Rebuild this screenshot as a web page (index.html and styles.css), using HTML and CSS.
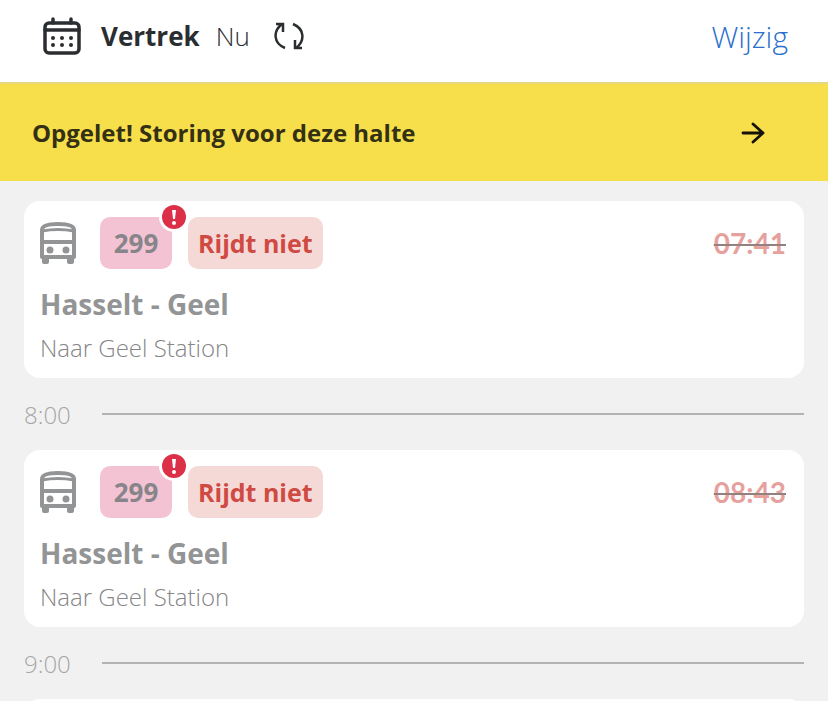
FILE: index.html
```html
<!DOCTYPE html>
<html lang="nl">
<head>
<meta charset="UTF-8">
<meta name="viewport" content="width=device-width, initial-scale=1.0">
<title>Vertrektijden</title>
<link rel="stylesheet" href="styles.css">
</head>
<body>
<svg class="sprite" aria-hidden="true">
  <symbol id="bus" viewBox="0 0 36 42">
    <g fill="none" stroke="currentColor" stroke-width="4" stroke-linejoin="round">
      <path d="M2 35V8Q2 2 18 2Q34 2 34 8V35Z"></path>
      <path d="M2 9Q18 6 34 9" stroke-width="3"></path>
      <path d="M2 20H34"></path>
    </g>
    <g fill="currentColor">
      <circle cx="10" cy="28" r="3.5"></circle>
      <circle cx="26" cy="28" r="3.5"></circle>
      <rect x="2" y="34" width="7" height="8" rx="2"></rect>
      <rect x="27" y="34" width="7" height="8" rx="2"></rect>
    </g>
  </symbol>
</svg>

<header class="topbar">
  <svg class="icon-calendar" viewBox="0 0 38 38" aria-hidden="true">
    <g fill="none" stroke="currentColor" stroke-width="3.5" stroke-linecap="round">
      <rect x="2" y="6" width="34" height="30" rx="4"></rect>
      <path d="M2 13H36M10 2V6M28 2V6"></path>
    </g>
    <g fill="currentColor">
      <circle cx="10" cy="21" r="2"></circle>
      <circle cx="19" cy="21" r="2"></circle>
      <circle cx="28" cy="21" r="2"></circle>
      <circle cx="10" cy="28" r="2"></circle>
      <circle cx="19" cy="28" r="2"></circle>
      <circle cx="28" cy="28" r="2"></circle>
    </g>
  </svg>
  <h1 class="topbar-title">Vertrek</h1>
  <span class="topbar-when">Nu</span>
  <button class="refresh" type="button" aria-label="Vernieuwen">
    <svg viewBox="0 0 30 28" aria-hidden="true">
      <path d="M11 26C-1 21 -1 9 8 2M2 2H9V10M19 2C31 7 31 19 22 26M28 26H21V18" fill="none" stroke="currentColor" stroke-width="2.5"></path>
    </svg>
  </button>
  <a class="edit" href="#">Wijzig</a>
</header>

<a class="alert" href="#">
  <span>Opgelet! Storing voor deze halte</span>
  <svg class="icon-arrow" viewBox="0 0 24 24" aria-hidden="true">
    <path d="M2 12H22M12 3L22 12L12 21" fill="none" stroke="currentColor" stroke-width="2.8" stroke-linecap="round" stroke-linejoin="round"></path>
  </svg>
</a>

<main class="departures">
  <article class="card">
    <div class="card-head">
      <svg class="icon-bus" aria-hidden="true"><use href="#bus"></use></svg>
      <span class="line">299
        <svg class="badge" viewBox="0 0 30 30" aria-hidden="true">
          <circle cx="15" cy="15" r="15" fill="#fff"></circle>
          <circle cx="15" cy="15" r="12" fill="#dc3049"></circle>
          <path d="M13 8H17L16 17H14Z" fill="#fff"></path>
          <circle cx="15" cy="21" r="2" fill="#fff"></circle>
        </svg>
      </span>
      <span class="status">Rijdt niet</span>
      <del class="time">07:41</del>
    </div>
    <h2 class="route">Hasselt - Geel</h2>
    <p class="direction">Naar Geel Station</p>
  </article>

  <div class="hour"><span>8:00</span></div>

  <article class="card">
    <div class="card-head">
      <svg class="icon-bus" aria-hidden="true"><use href="#bus"></use></svg>
      <span class="line">299
        <svg class="badge" viewBox="0 0 30 30" aria-hidden="true">
          <circle cx="15" cy="15" r="15" fill="#fff"></circle>
          <circle cx="15" cy="15" r="12" fill="#dc3049"></circle>
          <path d="M13 8H17L16 17H14Z" fill="#fff"></path>
          <circle cx="15" cy="21" r="2" fill="#fff"></circle>
        </svg>
      </span>
      <span class="status">Rijdt niet</span>
      <del class="time">08:43</del>
    </div>
    <h2 class="route">Hasselt - Geel</h2>
    <p class="direction">Naar Geel Station</p>
  </article>

  <div class="hour"><span>9:00</span></div>

  <article class="card"></article>
</main>
</body>
</html>
```

FILE: styles.css
```css
:root {
  --ink: #2b2e30;
  --grey: #939495;
  --grey-dark: #858687;
  --grey-light: #b3b3b3;
  --blue: #2a6fcb;
  --yellow: #f7de4b;
  --page: #f1f1f1;
}
* { box-sizing: border-box; }
body {
  margin: 0;
  height: 100vh;
  overflow: hidden;
  background: var(--page);
  color: var(--ink);
  font-family: "Open Sans", "Noto Sans", sans-serif;
}
h1, h2, p { margin: 0; }
a { text-decoration: none; }
.sprite {
  display: none;
}
.topbar {
  display: flex;
  align-items: center;
  height: 82px;
  padding: 0 40px 10px 43px;
  background: #fff;
}
.icon-calendar {
  width: 38px;
  height: 38px;
}
.topbar-title {
  margin-left: 20px;
  font-size: 26px;
  font-weight: 700;
}
.topbar-when {
  margin-left: 16px;
  font-size: 26px;
  font-weight: 300;
}
.refresh {
  display: flex;
  margin-left: 24px;
  padding: 0;
  border: none;
  background: none;
  color: var(--ink);
  cursor: pointer;
}
.refresh svg {
  width: 30px;
  height: 28px;
}
.edit {
  margin-left: auto;
  color: var(--blue);
  font-size: 30px;
  font-weight: 300;
}
.alert {
  display: flex;
  align-items: center;
  justify-content: space-between;
  height: 99px;
  padding: 0 63px 0 32px;
  border-top: 2px solid #e6d880;
  background: var(--yellow);
  color: #343014;
  font-size: 24px;
  font-weight: 700;
}
.icon-arrow {
  width: 24px;
  height: 24px;
  color: #15120a;
}
.departures {
  padding: 20px 24px;
}
.card {
  min-height: 177px;
  padding: 16px;
  border-radius: 16px;
  background: #fff;
  color: var(--grey);
}
.card-head {
  display: flex;
  align-items: center;
  height: 52px;
}
.icon-bus {
  width: 36px;
  height: 42px;
}
.line {
  position: relative;
  margin-left: 24px;
  width: 72px;
  border-radius: 10px;
  background: #f4c3d3;
  color: #87858a;
  font-size: 26px;
  font-weight: 700;
  line-height: 52px;
  text-align: center;
}
.badge {
  position: absolute;
  top: -15px;
  right: -17px;
  width: 30px;
  height: 30px;
}
.status {
  margin-left: 16px;
  padding: 0 10px;
  border-radius: 10px;
  background: #f5d9d7;
  color: #cf4a42;
  font-size: 25px;
  font-weight: 700;
  line-height: 52px;
}
.time {
  margin-left: auto;
  padding-right: 2px;
  color: #e6a19e;
  font-family: Lato, sans-serif;
  font-size: 28px;
  font-weight: 700;
  text-decoration: line-through 2px #94807f;
}
.route {
  margin-top: 18px;
  font-size: 28px;
  font-weight: 700;
  line-height: 34px;
}
.direction {
  margin-top: 12px;
  color: var(--grey-dark);
  font-size: 24px;
  font-weight: 300;
  line-height: 29px;
}
.hour {
  display: flex;
  align-items: center;
  height: 72px;
  color: #a6a6a6;
  font-size: 24px;
  font-weight: 300;
}
.hour span {
  width: 78px;
}
.hour::after {
  content: "";
  flex: 1;
  height: 2px;
  background: var(--grey-light);
}
```
